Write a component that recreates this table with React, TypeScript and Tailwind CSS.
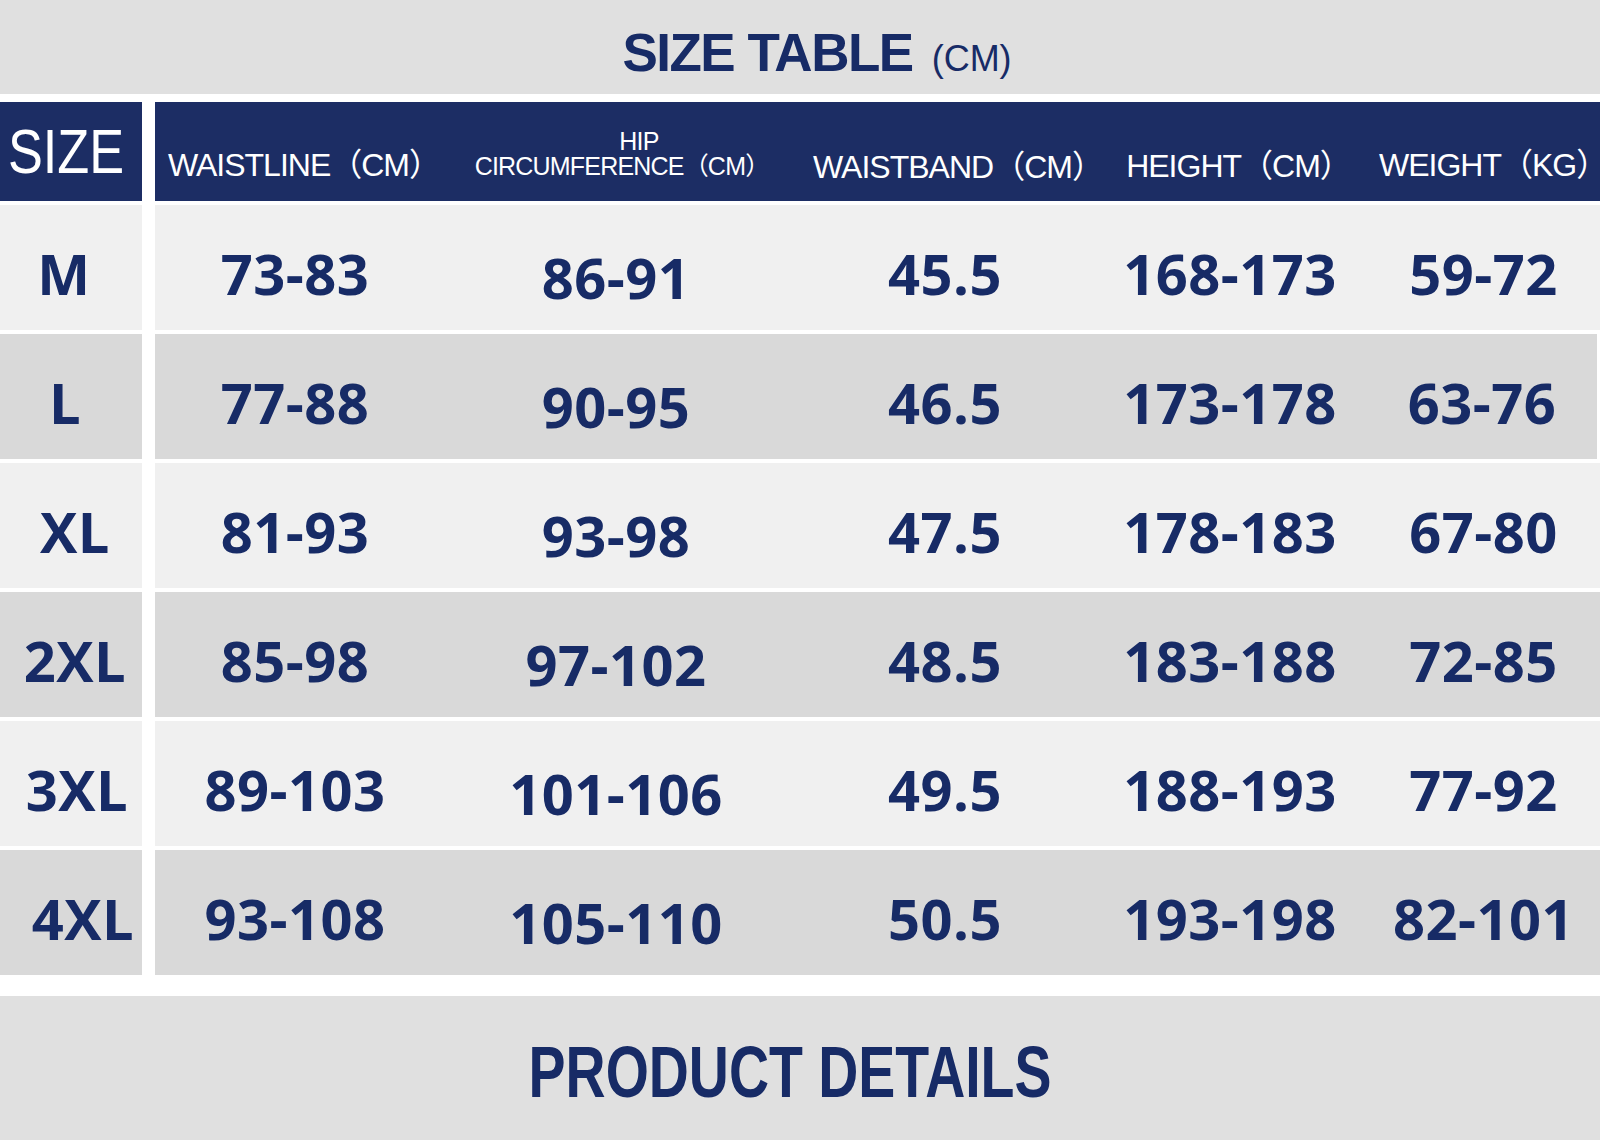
import React from "react";

const rows = [
  { size: "M", pad: "pr-[14px]", v: ["73-83", "86-91", "45.5", "168-173", "59-72"] },
  { size: "L", pad: "pr-[12px]", v: ["77-88", "90-95", "46.5", "173-178", "63-76"] },
  { size: "XL", pad: "pl-[8px]", v: ["81-93", "93-98", "47.5", "178-183", "67-80"] },
  { size: "2XL", pad: "pl-[8px]", v: ["85-98", "97-102", "48.5", "183-188", "72-85"] },
  { size: "3XL", pad: "pl-[12px]", v: ["89-103", "101-106", "49.5", "188-193", "77-92"] },
  { size: "4XL", pad: "pl-[24px]", v: ["93-108", "105-110", "50.5", "193-198", "82-101"] },
];

const NUM = "font-['Open_Sans',sans-serif] font-bold text-[56px] leading-none text-[#172b66] tracking-[0.5px]";
const HEAD = "font-['Liberation_Sans','Noto_Sans_CJK_SC',sans-serif] text-white leading-none whitespace-nowrap";

export default function App() {
  return (
    <div className="w-[1600px] h-[1142px] bg-white flex flex-col overflow-hidden">
      {/* Title */}
      <div className="h-[94px] shrink-0 bg-[#e0e0e0] flex items-center justify-center pl-[34px] pt-[10px]">
        <div className="flex items-baseline font-['Liberation_Sans',sans-serif] text-[#172b66]">
          <span className="text-[53px] font-bold tracking-[-1.5px] leading-none">SIZE TABLE</span>
          <span className="text-[36px] ml-[19px] leading-none">(CM)</span>
        </div>
      </div>

      {/* Header */}
      <div className="mt-[8px] h-[99px] shrink-0 flex">
        <div className="w-[142px] shrink-0 bg-[#1c2d64] flex items-center justify-center pr-[10px]">
          <span className="inline-block scale-x-[0.83] font-['Liberation_Sans',sans-serif] text-white text-[63px] leading-none">SIZE</span>
        </div>
        <div className="w-[13px] shrink-0 bg-white" />
        <div className="flex-1 bg-[#1c2d64] grid grid-cols-[280px_362px_296px_274px_1fr]">
          <div className="flex items-center justify-center pt-[26px] pl-[18px]">
            <span className={`${HEAD} text-[32px] tracking-[-1px]`}>WAISTLINE（CM）</span>
          </div>
          <div className="flex flex-col items-center justify-center pt-[4px] pl-[12px]">
            <span className={`${HEAD} text-[25px] leading-[27px] tracking-[-0.8px] pl-[34px]`}>HIP</span>
            <span className={`${HEAD} text-[25px] leading-[27px] tracking-[-0.8px]`}>CIRCUMFERENCE（CM）</span>
          </div>
          <div className="flex items-center justify-center pt-[30px] pl-[26px]">
            <span className={`${HEAD} text-[32px] tracking-[-1px]`}>WAISTBAND（CM）</span>
          </div>
          <div className="flex items-center justify-center pt-[28px] pl-[17px]">
            <span className={`${HEAD} text-[32px] tracking-[-1px]`}>HEIGHT（CM）</span>
          </div>
          <div className="flex items-center justify-start pt-[26px] pl-[12px]">
            <span className={`${HEAD} text-[32px] tracking-[-1px]`}>
              WEIGHT（KG<span className="tracking-[-18px]">）</span>
            </span>
          </div>
        </div>
      </div>

      {/* Rows */}
      <div className="flex flex-col gap-[4px] mt-[4px]">
        {rows.map((r, i) => {
          const bg = i % 2 === 0 ? "bg-[#f0f0f0]" : "bg-[#d9d9d9]";
          return (
            <div key={r.size} className="h-[125px] shrink-0 flex">
              <div className={`w-[142px] shrink-0 ${bg} ${r.pad} flex items-center justify-center pt-[10px]`}>
                <span className={NUM}>{r.size}</span>
              </div>
              <div className="w-[13px] shrink-0 bg-white" />
              <div className={`flex-1 ${bg} ${i === 1 ? "mr-[3px]" : ""} grid grid-cols-[280px_362px_296px_274px_1fr]`}>
                {r.v.map((val, j) => (
                  <div
                    key={j}
                    className={`flex items-center justify-center ${j === 1 ? "pt-[18px]" : "pt-[10px]"}`}
                  >
                    <span className={NUM}>{val}</span>
                  </div>
                ))}
              </div>
            </div>
          );
        })}
      </div>

      {/* Product details */}
      <div className="mt-[21px] h-[144px] shrink-0 bg-[#e0e0e0] flex items-center justify-center pr-[20px] pt-[6px]">
        <span className="inline-block scale-x-[0.76] font-['Liberation_Sans',sans-serif] font-bold text-[73px] leading-none text-[#172b66] whitespace-nowrap">
          PRODUCT DETAILS
        </span>
      </div>
    </div>
  );
}
